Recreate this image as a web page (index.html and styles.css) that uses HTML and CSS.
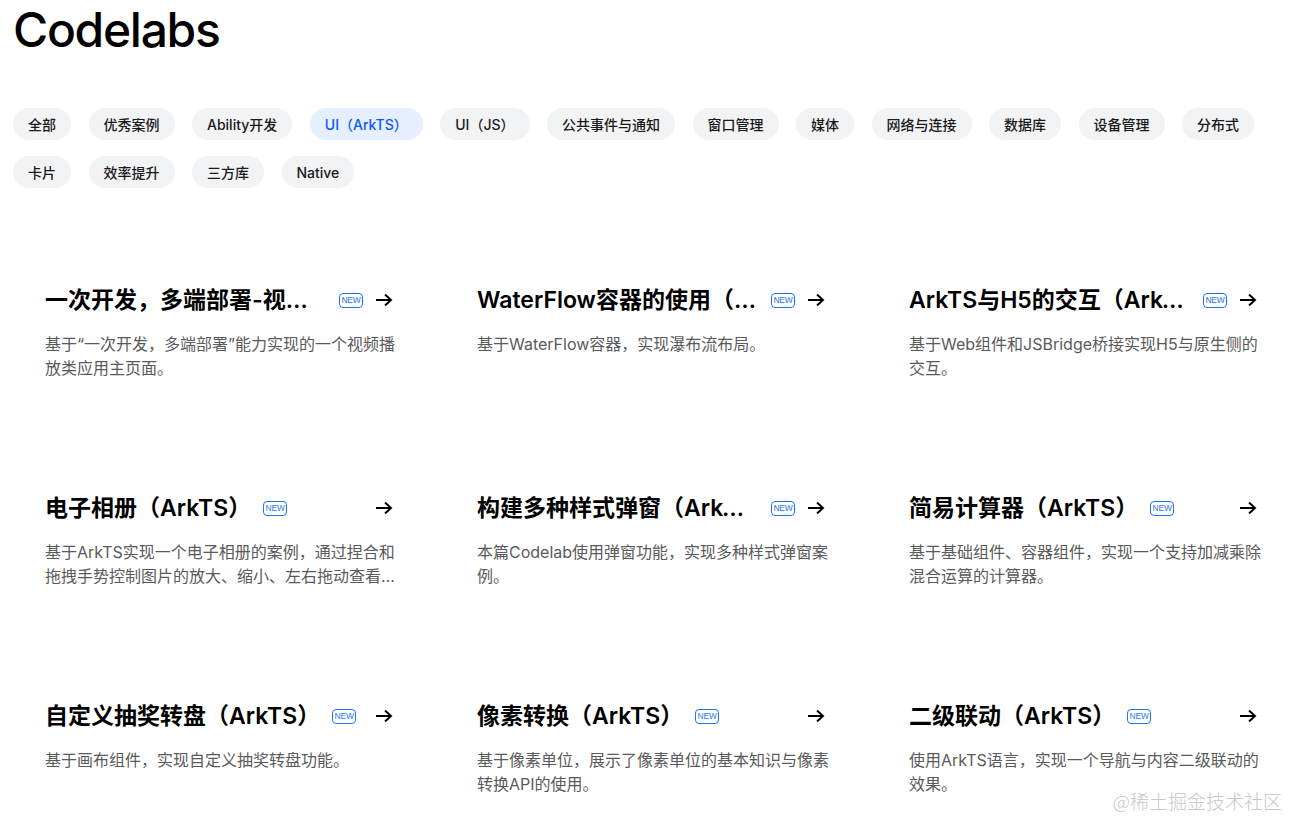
FILE: index.html
```html
<!DOCTYPE html>
<html lang="zh-CN">
<head>
    <meta charset="UTF-8">
    <meta name="viewport" content="width=device-width, initial-scale=1.0">
    <title>Codelabs</title>
    <link rel="stylesheet" href="styles.css">
</head>
<body>
    <main class="page">
        <h1 class="page-title">Codelabs</h1>

        <div class="filters">
            <span class="chip">全部</span>
            <span class="chip">优秀案例</span>
            <span class="chip">Ability开发</span>
            <span class="chip active">UI（ArkTS）</span>
            <span class="chip">UI（JS）</span>
            <span class="chip">公共事件与通知</span>
            <span class="chip">窗口管理</span>
            <span class="chip">媒体</span>
            <span class="chip">网络与连接</span>
            <span class="chip">数据库</span>
            <span class="chip">设备管理</span>
            <span class="chip">分布式</span>
            <span class="chip">卡片</span>
            <span class="chip">效率提升</span>
            <span class="chip">三方库</span>
            <span class="chip">Native</span>
        </div>

        <div class="cards">
            <div class="card">
                <div class="card-head">
                    <div class="card-name">
                        <h3 class="card-title">一次开发，多端部署-视频播放</h3>
                        <span class="badge">NEW</span>
                    </div>
                    <svg class="arrow" viewBox="0 0 18 14"><path d="M1 7h15M10 1.5L16 7l-6 5.5" /></svg>
                </div>
                <p class="card-desc">基于“一次开发，多端部署”能力实现的一个视频播放类应用主页面。</p>
            </div>
            <div class="card">
                <div class="card-head">
                    <div class="card-name">
                        <h3 class="card-title">WaterFlow容器的使用（ArkTS）</h3>
                        <span class="badge">NEW</span>
                    </div>
                    <svg class="arrow" viewBox="0 0 18 14"><path d="M1 7h15M10 1.5L16 7l-6 5.5" /></svg>
                </div>
                <p class="card-desc">基于WaterFlow容器，实现瀑布流布局。</p>
            </div>
            <div class="card">
                <div class="card-head">
                    <div class="card-name">
                        <h3 class="card-title">ArkTS与H5的交互（ArkTS）</h3>
                        <span class="badge">NEW</span>
                    </div>
                    <svg class="arrow" viewBox="0 0 18 14"><path d="M1 7h15M10 1.5L16 7l-6 5.5" /></svg>
                </div>
                <p class="card-desc">基于Web组件和JSBridge桥接实现H5与原生侧的交互。</p>
            </div>

            <div class="card">
                <div class="card-head">
                    <div class="card-name">
                        <h3 class="card-title">电子相册（ArkTS）</h3>
                        <span class="badge">NEW</span>
                    </div>
                    <svg class="arrow" viewBox="0 0 18 14"><path d="M1 7h15M10 1.5L16 7l-6 5.5" /></svg>
                </div>
                <p class="card-desc">基于ArkTS实现一个电子相册的案例，通过捏合和拖拽手势控制图片的放大、缩小、左右拖动查看细节等效果。</p>
            </div>
            <div class="card">
                <div class="card-head">
                    <div class="card-name">
                        <h3 class="card-title">构建多种样式弹窗（ArkTS）</h3>
                        <span class="badge">NEW</span>
                    </div>
                    <svg class="arrow" viewBox="0 0 18 14"><path d="M1 7h15M10 1.5L16 7l-6 5.5" /></svg>
                </div>
                <p class="card-desc">本篇Codelab使用弹窗功能，实现多种样式弹窗案例。</p>
            </div>
            <div class="card">
                <div class="card-head">
                    <div class="card-name">
                        <h3 class="card-title">简易计算器（ArkTS）</h3>
                        <span class="badge">NEW</span>
                    </div>
                    <svg class="arrow" viewBox="0 0 18 14"><path d="M1 7h15M10 1.5L16 7l-6 5.5" /></svg>
                </div>
                <p class="card-desc">基于基础组件、容器组件，实现一个支持加减乘除混合运算的计算器。</p>
            </div>

            <div class="card">
                <div class="card-head">
                    <div class="card-name">
                        <h3 class="card-title">自定义抽奖转盘（ArkTS）</h3>
                        <span class="badge">NEW</span>
                    </div>
                    <svg class="arrow" viewBox="0 0 18 14"><path d="M1 7h15M10 1.5L16 7l-6 5.5" /></svg>
                </div>
                <p class="card-desc">基于画布组件，实现自定义抽奖转盘功能。</p>
            </div>
            <div class="card">
                <div class="card-head">
                    <div class="card-name">
                        <h3 class="card-title">像素转换（ArkTS）</h3>
                        <span class="badge">NEW</span>
                    </div>
                    <svg class="arrow" viewBox="0 0 18 14"><path d="M1 7h15M10 1.5L16 7l-6 5.5" /></svg>
                </div>
                <p class="card-desc">基于像素单位，展示了像素单位的基本知识与像素转换API的使用。</p>
            </div>
            <div class="card">
                <div class="card-head">
                    <div class="card-name">
                        <h3 class="card-title">二级联动（ArkTS）</h3>
                        <span class="badge">NEW</span>
                    </div>
                    <svg class="arrow" viewBox="0 0 18 14"><path d="M1 7h15M10 1.5L16 7l-6 5.5" /></svg>
                </div>
                <p class="card-desc">使用ArkTS语言，实现一个导航与内容二级联动的效果。</p>
            </div>
        </div>
    </main>

    <div class="watermark">@稀土掘金技术社区</div>
</body>
</html>
```

FILE: styles.css
```css
* {
    margin: 0;
    padding: 0;
    box-sizing: border-box;
}

body {
    font-family: "Inter", "Noto Sans CJK SC", sans-serif;
    color: #000;
    background-color: #fff;
    height: 817px;
    overflow: hidden;
    position: relative;
}

.page {
    padding: 0 13px;
}

.page-title {
    font-size: 48px;
    font-weight: 500;
    line-height: 60px;
    height: 60px;
    letter-spacing: -1.3px;
    margin-bottom: 48px;
}

.filters {
    display: flex;
    flex-wrap: wrap;
    gap: 16px 17.5px;
    width: 1262px;
}

.chip {
    display: inline-flex;
    align-items: center;
    height: 32px;
    padding: 0 15px;
    border-radius: 16px;
    background-color: #f1f3f5;
    font-size: 14px;
    font-weight: 500;
    color: #1a1a1a;
}

.chip.active {
    background-color: #e6efff;
    color: #0a59f7;
}

.cards {
    display: grid;
    grid-template-columns: repeat(3, 352px);
    column-gap: 80px;
    row-gap: 112px;
    margin-top: 96px;
    padding-left: 32px;
}

.card-head {
    display: flex;
    align-items: center;
    height: 32px;
}

.card-name {
    display: flex;
    align-items: center;
    flex: 1;
    min-width: 0;
    padding-right: 12px;
}

.card-title {
    font-size: 23px;
    font-weight: 600;
    line-height: 32px;
    white-space: nowrap;
    overflow: hidden;
    text-overflow: ellipsis;
    min-width: 0;
    max-width: 286px;
}

.badge {
    flex-shrink: 0;
    margin-left: 12px;
    width: 24px;
    height: 15px;
    border: 1.5px solid #1f74f0;
    border-radius: 4px;
    color: #1f74f0;
    font-size: 8.5px;
    font-weight: 400;
    line-height: 12px;
    text-align: center;
    letter-spacing: -0.2px;
    font-family: "Liberation Sans", sans-serif;
}

.arrow {
    flex-shrink: 0;
    width: 18px;
    height: 14px;
    margin-right: 4px;
    fill: none;
    stroke: #000;
    stroke-width: 2;
}

.card-desc {
    margin-top: 16px;
    font-size: 16px;
    line-height: 24px;
    color: #5a5a5a;
    display: -webkit-box;
    -webkit-line-clamp: 2;
    -webkit-box-orient: vertical;
    overflow: hidden;
}

.watermark {
    position: absolute;
    right: 7px;
    bottom: 3px;
    font-size: 19px;
    color: #c8c8c8;
    font-family: "Noto Sans CJK SC", sans-serif;
    font-weight: 300;
}
```
